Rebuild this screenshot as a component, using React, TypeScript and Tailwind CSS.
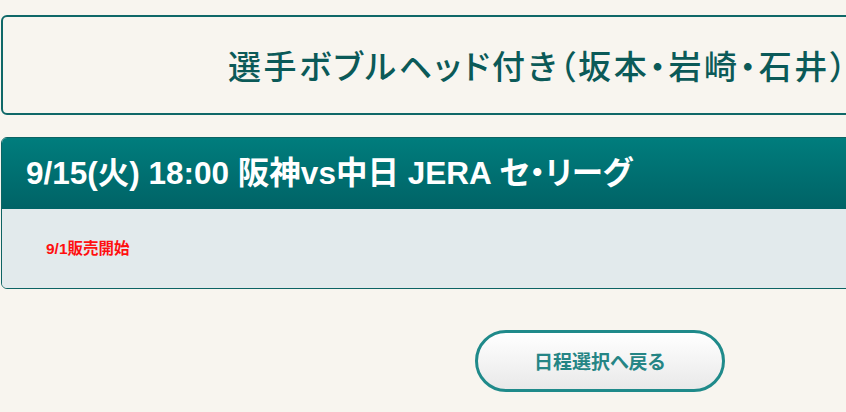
import React from "react"

const jp = "font-['Noto_Sans_CJK_JP',sans-serif] [font-feature-settings:'palt']"
const mixed = "font-['Liberation_Sans','Noto_Sans_CJK_JP',sans-serif] [font-feature-settings:'palt']"

export default function App() {
  return (
    <div className="w-[846px] h-[412px] overflow-hidden bg-[#f8f5ef]">
      <div className="w-[1198px] pt-[15px] pl-[1px]">
        {/* title */}
        <div className="h-[100px] border-2 border-[#0f6868] rounded-md flex items-center pl-[225px]">
          <h1 className={`${jp} text-[33px] font-medium leading-none tracking-[2.6px] text-[#0b5a58] whitespace-nowrap`}>
            選手ボブルヘッド付き（坂本・岩崎・石井）
          </h1>
        </div>

        {/* game */}
        <div className="mt-[22px] border border-[#0d6464] rounded-md overflow-hidden">
          <div className="h-[71px] bg-gradient-to-b from-[#007d7d] to-[#006366] flex items-center pl-[24px]">
            <h2 className={`${mixed} text-[31.5px] font-bold text-white leading-none whitespace-nowrap`}>
              9/15(火) 18:00 阪神vs中日 JERA セ・リーグ
            </h2>
          </div>
          <div className="h-[79px] bg-[#e2eaec] flex items-center pl-[44px]">
            <p className={`${mixed} text-[15.5px] font-bold text-[#ff1010] leading-none`}>9/1販売開始</p>
          </div>
        </div>

        <div className="flex justify-center mt-[41px]">
          <button className={`${jp} w-[250px] h-[62px] rounded-full border-[3px] border-[#1f8a8a] bg-gradient-to-b from-white to-[#e9e9e9] text-[19px] font-bold text-[#258585]`}>
            日程選択へ戻る
          </button>
        </div>
      </div>
    </div>
  )
}
